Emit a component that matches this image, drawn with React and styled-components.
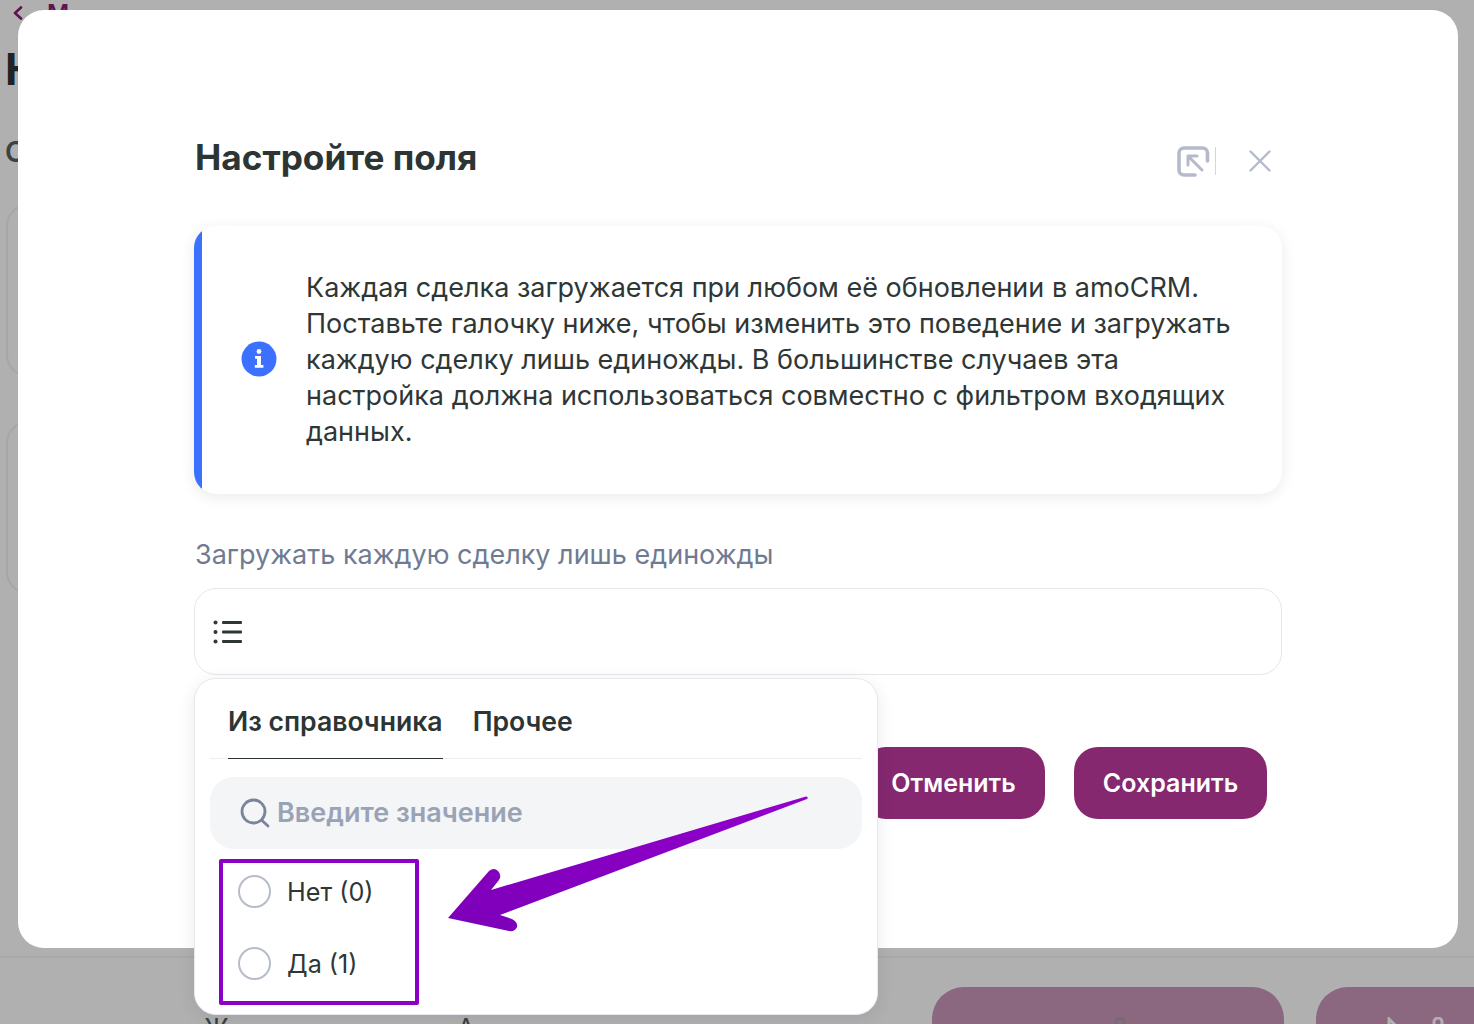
import React from "react";
import styled, { createGlobalStyle } from "styled-components";

const Global = createGlobalStyle`
  html, body { margin: 0; padding: 0; }
  body { font-family: Inter, "Noto Sans", sans-serif; background: #b0b0b0; }
  * { box-sizing: border-box; }
`;

const Page = styled.div`
  position: relative;
  width: 1474px;
  height: 1024px;
  overflow: hidden;
  background: #b0b0b0;
`;

/* Page behind the modal */
const Backdrop = styled.div`
  display: flex;
  flex-direction: column;
  height: 100%;
`;
const BackLink = styled.div`
  display: flex;
  align-items: center;
  gap: 24px;
  height: 24px;
  padding: 2px 0 0 13px;
  color: #5e1450;
  font-size: 24px;
  font-weight: 600;
`;
const PageTitle = styled.div`
  margin-top: 14px;
  padding-left: 5px;
  height: 60px;
  font-size: 44px;
  line-height: 62px;
  font-weight: 700;
  color: #1f2322;
`;
const PageSub = styled.div`
  margin-top: 34px;
  padding-left: 5px;
  height: 40px;
  font-size: 28px;
  line-height: 40px;
  font-weight: 600;
  color: #3a4342;
`;
const BgCards = styled.div`
  display: flex;
  flex-direction: column;
  gap: 44px;
  margin-top: 32px;
  padding-left: 6px;
`;
const BgCard = styled.div`
  width: 300px;
  height: 173px;
  border: 2px solid #a6a6a6;
  border-radius: 22px;
`;
const BgFooter = styled.div`
  margin-top: auto;
  height: 68px;
  border-top: 2px solid #a8a8a8;
  display: flex;
  padding: 29px 0 0 204px;
`;
const BgLabels = styled.div`
  display: flex;
  flex: none;
  gap: 228px;
  width: 728px;
  padding-top: 26px;
  font-size: 26px;
  color: #3a3f3e;
  line-height: 30px;
`;
const BgButton = styled.div`
  flex: none;
  display: flex;
  align-items: flex-start;
  justify-content: center;
  width: ${(p) => p.$w}px;
  height: 80px;
  margin-right: 32px;
  padding-top: 30px;
  border-radius: 32px;
  background: #8c6780;
`;

/* Modal */
const Modal = styled.div`
  position: absolute;
  left: 18px;
  top: 10px;
  width: 1440px;
  height: 938px;
  background: #fff;
  border-radius: 26px;
  padding: 0 176px 0 176px;
`;
const Header = styled.div`
  display: flex;
  align-items: flex-start;
  justify-content: space-between;
  height: 216px;
  padding-top: 125px;
`;
const Title = styled.h2`
  margin: 0;
  padding-left: 1px;
  font-size: 35.2px;
  line-height: 44px;
  font-weight: 700;
  color: #2d3534;
`;
const HeaderIcons = styled.div`
  display: flex;
  align-items: center;
  gap: 32px;
  padding: 10px 11px 0 0;
  color: #b4bac9;
`;
const InfoCard = styled.div`
  display: flex;
  align-items: center;
  height: 268px;
  overflow: hidden;
  border-radius: 22px;
  background: #fff;
  box-shadow: 0 3px 14px rgba(40, 50, 80, 0.1);
  padding-right: 30px;
`;
const InfoBar = styled.div`
  flex: none;
  align-self: stretch;
  width: 8px;
  background: #3b71fe;
`;
const InfoGlyph = styled.svg`
  flex: none;
  margin: 0 29px 2px 39px;
`;
const InfoText = styled.p`
  margin: 0;
  font-size: 27px;
  line-height: 36px;
  color: #2f3736;
`;
const FieldLabel = styled.div`
  margin-top: 43px;
  padding-left: 1px;
  font-size: 27px;
  line-height: 36px;
  color: #6f7b92;
`;
const FieldWrap = styled.div`
  position: relative;
  margin-top: 15px;
`;
const Select = styled.div`
  display: flex;
  align-items: center;
  height: 87px;
  padding-left: 18px;
  border: 1px solid #e6e7ea;
  border-radius: 22px;
  background: #fff;
  color: #2f3736;
`;
const Footer = styled.div`
  display: flex;
  justify-content: flex-end;
  gap: 29px;
  margin-top: 72px;
  padding-right: 15px;
`;
const Button = styled.button`
  height: 72px;
  width: ${(p) => p.$w}px;
  border: 0;
  border-radius: 24px;
  background: #852870;
  color: #fff;
  font-family: inherit;
  font-size: 25px;
  font-weight: 600;
`;

/* Dropdown over the modal */
const Dropdown = styled.div`
  position: absolute;
  left: 0;
  top: 90px;
  width: 684px;
  height: 337px;
  padding: 0 15px;
  background: #fff;
  border: 1px solid #e8e9ec;
  border-radius: 22px;
  box-shadow: 0 4px 16px rgba(40, 50, 80, 0.1);
  z-index: 2;
`;
const Tabs = styled.div`
  display: flex;
  gap: 30px;
  height: 80px;
  padding-left: 18px;
  border-bottom: 1px solid #eceef0;
`;
const Tab = styled.div`
  height: 80px;
  padding-top: 22px;
  font-size: 26.6px;
  line-height: 40px;
  font-weight: 600;
  color: #2d3534;
  border-bottom: ${(p) => (p.$active ? "1px solid #2d3534" : "0")};
`;
const SearchBox = styled.div`
  display: flex;
  align-items: center;
  gap: 6px;
  height: 72px;
  margin-top: 18px;
  padding-left: 29px;
  border-radius: 24px;
  background: #f3f5f7;
  color: #7a849a;
`;
const Placeholder = styled.span`
  font-size: 27px;
  line-height: 32px;
  padding-bottom: 1px;
  font-weight: 600;
  color: #9aa3b5;
`;
const Highlight = styled.div`
  width: 200px;
  height: 146px;
  margin: 10px 0 0 9px;
  border: 4px solid #8a00c4;
  border-radius: 2px;
  display: flex;
  flex-direction: column;
  gap: 36px;
  padding: 10px 0 0 15px;
`;
const Option = styled.div`
  display: flex;
  align-items: center;
  gap: 16px;
  height: 36px;
  font-size: 25.2px;
  color: #2f3736;
`;
const OptionLabel = styled.span`
  padding-top: 2px;
`;
const Radio = styled.span`
  flex: none;
  width: 33px;
  height: 33px;
  border: 2px solid #b7bcca;
  border-radius: 50%;
`;
const Arrow = styled.svg`
  position: absolute;
  left: 0;
  top: 0;
  z-index: 3;
  pointer-events: none;
`;

const CollapseIcon = () => (
  <svg width="40" height="32" viewBox="0 0 40 32" fill="none">
    <path d="M30.5 16V8a5 5 0 0 0-5-5H7a5 5 0 0 0-5 5v17a5 5 0 0 0 5 5h11" stroke="currentColor" strokeWidth="3.6" strokeLinecap="round" />
    <path d="M11 11l14 14M11 11v9M11 11h9" stroke="currentColor" strokeWidth="3" strokeLinecap="round" />
    <path d="M38.5 2v28" stroke="currentColor" strokeWidth="1" opacity=".6" />
  </svg>
);
const CloseIcon = () => (
  <svg width="22" height="22" viewBox="0 0 22 22" fill="none">
    <path d="M1.5 1.5l19 19M20.5 1.5l-19 19" stroke="currentColor" strokeWidth="2.4" strokeLinecap="round" />
  </svg>
);
const InfoIcon = () => (
  <InfoGlyph width="36" height="36" viewBox="0 0 36 36">
    <circle cx="18" cy="18" r="17.5" fill="#3b71fe" />
    <circle cx="18" cy="10.5" r="2.4" fill="#fff" />
    <path d="M14 15h6v9h2.4v2.8h-8.6V24h2.2v-6.2H14z" fill="#fff" />
  </InfoGlyph>
);
const ListIcon = () => (
  <svg width="30" height="24" viewBox="0 0 30 24">
    <g fill="currentColor">
      <circle cx="2.5" cy="2.5" r="2" />
      <circle cx="2.5" cy="12" r="2" />
      <circle cx="2.5" cy="21.5" r="2" />
      <rect x="9" y="1" width="20" height="3" rx="1" />
      <rect x="9" y="10.5" width="20" height="3" rx="1" />
      <rect x="9" y="20" width="20" height="3" rx="1" />
    </g>
  </svg>
);
const SearchIcon = () => (
  <svg width="32" height="32" viewBox="0 0 32 32" fill="none">
    <circle cx="14.5" cy="14.5" r="11.5" stroke="currentColor" strokeWidth="2.8" />
    <path d="M23 23.5l6 5.5" stroke="currentColor" strokeWidth="2.8" strokeLinecap="round" />
  </svg>
);
const Chevron = () => (
  <svg width="10" height="14" viewBox="0 0 10 14" fill="none">
    <path d="M8 1.5L2 7l6 5.5" stroke="currentColor" strokeWidth="2.6" strokeLinecap="round" strokeLinejoin="round" />
  </svg>
);
const BgSaveGlyph = () => (
  <svg width="40" height="12" viewBox="0 0 40 12" fill="none">
    <path d="M2 11V8M28 11V5a4 4 0 0 1 8 0v6" stroke="#6f6f6f" strokeWidth="3" />
  </svg>
);
const BgRunGlyph = () => (
  <svg width="60" height="12" viewBox="0 0 60 12" fill="none">
    <path d="M3 11V2l9 9M48 11V5a4 4 0 0 1 8 0v6" stroke="#b0b0b0" strokeWidth="3" />
  </svg>
);

export default function App() {
  return (
    <Page>
      <Global />
      <Backdrop>
        <BackLink>
          <Chevron />
          <span>М</span>
        </BackLink>
        <PageTitle>К</PageTitle>
        <PageSub>С</PageSub>
        <BgCards>
          <BgCard />
          <BgCard />
        </BgCards>
        <BgFooter>
          <BgLabels>
            <span>Ж</span>
            <span>А</span>
          </BgLabels>
          <BgButton $w={352}>
            <BgSaveGlyph />
          </BgButton>
          <BgButton $w={200}>
            <BgRunGlyph />
          </BgButton>
        </BgFooter>
      </Backdrop>

      <Modal>
        <Header>
          <Title>Настройте поля</Title>
          <HeaderIcons>
            <CollapseIcon />
            <CloseIcon />
          </HeaderIcons>
        </Header>
        <InfoCard>
          <InfoBar />
          <InfoIcon />
          <InfoText>
            Каждая сделка загружается при любом её обновлении в amoCRM.
            <br />
            Поставьте галочку ниже, чтобы изменить это поведение и загружать
            <br />
            каждую сделку лишь единожды. В большинстве случаев эта
            <br />
            настройка должна использоваться совместно с фильтром входящих
            <br />
            данных.
          </InfoText>
        </InfoCard>
        <FieldLabel>Загружать каждую сделку лишь единожды</FieldLabel>
        <FieldWrap>
          <Select>
            <ListIcon />
          </Select>
          <Dropdown>
            <Tabs>
              <Tab $active>Из справочника</Tab>
              <Tab>Прочее</Tab>
            </Tabs>
            <SearchBox>
              <SearchIcon />
              <Placeholder>Введите значение</Placeholder>
            </SearchBox>
            <Highlight>
              <Option>
                <Radio />
                <OptionLabel>Нет (0)</OptionLabel>
              </Option>
              <Option>
                <Radio />
                <OptionLabel>Да (1)</OptionLabel>
              </Option>
            </Highlight>
          </Dropdown>
        </FieldWrap>
        <Footer>
          <Button $w={183}>Отменить</Button>
          <Button $w={193}>Сохранить</Button>
        </Footer>
      </Modal>

      <Arrow width="1474" height="1024" viewBox="0 0 1474 1024">
        <defs>
          <linearGradient id="arrowFill" x1="0" y1="1" x2="1" y2="0">
            <stop offset="0" stopColor="#7d00b8" />
            <stop offset="1" stopColor="#9200cc" />
          </linearGradient>
        </defs>
        <path
          d="M448 918 L489 871 Q494 867 498 871 Q502 875 499 880 L491 890 L806 796.5 Q809 797 807 799 L500 915 L512 919 Q518 922 517 927 Q515 932 509 931 Z"
          fill="url(#arrowFill)"
        />
      </Arrow>
    </Page>
  );
}
